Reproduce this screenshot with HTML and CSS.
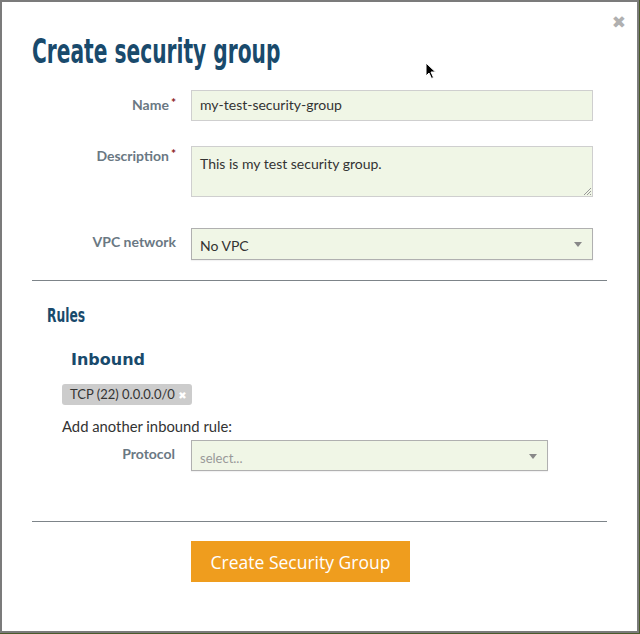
FILE: index.html
```html
<!DOCTYPE html>
<html>
<head>
<meta charset="utf-8">
<link rel="stylesheet" href="styles.css">
</head>
<body>
<div class="modal">
  <span class="close">&#10006;</span>
  <h1 class="title">Create security group</h1>
  <div class="form">
    <div class="row row-name">
      <label class="label">Name<span class="req">*</span></label>
      <div class="field input">my-test-security-group</div>
    </div>
    <div class="row row-desc">
      <label class="label desc-label">Description<span class="req">*</span></label>
      <div class="field textarea">This is my test security group.
        <svg class="grip" width="10" height="10" viewBox="0 0 10 10"><path d="M9 2 L2 9 M9 5 L5 9 M9 8 L8 9" stroke="#999" stroke-width="1"/></svg>
      </div>
    </div>
    <div class="row row-vpc">
      <label class="label">VPC network</label>
      <div class="field select">No VPC<span class="caret"></span></div>
    </div>
  </div>
  <hr class="rule">
  <h2 class="rules">Rules</h2>
  <div class="inbound">
    <h3 class="inbound-title">Inbound</h3>
    <span class="badge">TCP (22) 0.0.0.0/0 <span class="badge-x">&#10006;</span></span>
    <p class="add">Add another inbound rule:</p>
    <div class="row row-proto">
      <label class="label proto-label">Protocol</label>
      <div class="field select proto placeholder">select...<span class="caret"></span></div>
    </div>
  </div>
  <hr class="rule rule2">
  <div class="actions">
    <button class="btn">Create Security Group</button>
  </div>
  <svg class="cursor" width="12" height="18" viewBox="0 0 12 18"><path d="M1 1 L1 14 L4 11 L6.5 16.5 L8.5 15.5 L6 10 L10.5 10 Z" fill="#000" stroke="#fff" stroke-width="1"/></svg>
</div>
</body>
</html>
```

FILE: styles.css
```css
html, body {
  margin: 0;
  padding: 0;
}
body {
  background: #4a5a2a;
  width: 640px;
  height: 634px;
  overflow: hidden;
  font-family: Lato, "Open Sans", sans-serif;
}
.modal {
  position: relative;
  box-sizing: border-box;
  width: 639px;
  height: 633px;
  background: #fff;
  border: 2px solid #7b7b7b;
  padding: 0 30px 0 30px;
}
.close {
  position: absolute;
  right: 11px;
  top: 10px;
  font-size: 17px;
  color: #b0b0b0;
  font-family: "DejaVu Sans", sans-serif;
  font-weight: bold;
}
.title {
  margin: 32px 0 0 0;
  font-family: "DejaVu Sans Condensed", sans-serif;
  font-weight: bold;
  font-size: 33px;
  line-height: 36px;
  color: #194a6c;
  transform: scaleX(0.68);
  transform-origin: left center;
  white-space: nowrap;
}
.form {
  margin-top: 20px;
}
.row {
  display: flex;
  align-items: flex-start;
}
.label {
  width: 144px;
  flex: none;
  text-align: right;
  font-size: 14px;
  font-weight: bold;
  color: #6a7883;
  padding-top: 5px;
  margin-right: 15px;
}
.desc-label {
  padding-top: 0;
}
.req {
  color: #8b1a1a;
  font-size: 12px;
  margin-left: 2px;
  vertical-align: 3px;
}
.field {
  position: relative;
  box-sizing: border-box;
  width: 402px;
  background: #f0f6e6;
  border: 1px solid #cfcfcf;
  font-size: 14px;
  color: #333;
  padding: 6px 8px;
  line-height: 16px;
}
.input {
  height: 31px;
}
.row-desc {
  margin-top: 25px;
}
.textarea {
  height: 51px;
  padding-top: 9px;
}
.grip {
  position: absolute;
  right: 0;
  bottom: 0;
}
.row-vpc {
  margin-top: 31px;
}
.select {
  height: 32px;
  border-color: #b0b0b0;
  padding-top: 9px;
  box-shadow: 0 1px 1px rgba(0,0,0,0.05);
}
.caret {
  position: absolute;
  right: 10px;
  top: 13px;
  width: 0;
  height: 0;
  border-left: 4px solid transparent;
  border-right: 4px solid transparent;
  border-top: 5px solid #888;
}
.rule {
  margin: 20px 0 0 0;
  border: 0;
  border-top: 1px solid #7d8489;
  height: 0;
}
.rules {
  margin: 23px 0 0 15px;
  font-family: "DejaVu Sans Condensed", sans-serif;
  font-weight: bold;
  font-size: 19px;
  line-height: 22px;
  color: #194a6c;
  transform: scaleX(0.72);
  transform-origin: left center;
}
.inbound {
  padding-left: 30px;
}
.inbound-title {
  margin: 25px 0 0 9px;
  font-family: "DejaVu Sans", sans-serif;
  font-weight: bold;
  font-size: 16px;
  line-height: 18px;
  color: #194a6c;
}
.badge {
  display: inline-block;
  margin-top: 15px;
  background: #cccccc;
  border-radius: 3px;
  padding: 2px 5px 1px 8px;
  font-size: 13px;
  line-height: 16px;
  color: #333;
  font-family: Lato, sans-serif;
}
.badge-x {
  color: #fff;
  font-family: "DejaVu Sans", sans-serif;
  font-size: 10px;
  font-weight: bold;
}
.add {
  margin: 12px 0 0 0;
  font-size: 14.8px;
  line-height: 18px;
  color: #333;
}
.row-proto {
  margin-top: 5px;
}
.proto-label {
  width: 113px;
  margin-right: 16px;
}
.proto {
  width: 357px;
  height: 31px;
}
.placeholder {
  color: #999;
  font-size: 13px;
}
.rule2 {
  margin-top: 50px;
}
.actions {
  margin-top: 19px;
  padding-left: 159px;
}
.btn {
  width: 219px;
  height: 41px;
  border: 0;
  background: #ef9d1e;
  color: #fff;
  font-family: "Open Sans", sans-serif;
  font-size: 17.5px;
  padding: 0;
}
.cursor {
  position: absolute;
  left: 423px;
  top: 60px;
}
```
